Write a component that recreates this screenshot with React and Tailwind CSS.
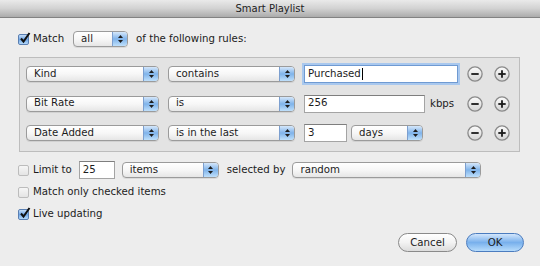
import React from 'react'

const font = { fontFamily: '"DejaVu Sans", "Liberation Sans", sans-serif' }

function Arrows() {
  return (
    <svg width="7" height="10" viewBox="0 0 7 10" className="block">
      <path d="M3.5 1 L6 4 L1 4 Z" fill="#1d1d1d" />
      <path d="M3.5 9 L6 6 L1 6 Z" fill="#1d1d1d" />
    </svg>
  )
}

function Select({ label, w, h = 'h-[16px]' }) {
  return (
    <div
      className={`${w} ${h} shrink-0 flex rounded-[4px] border border-[#9b9b9b] overflow-hidden bg-gradient-to-b from-white via-[#f7f7f7] to-[#e6e6e6] shadow-[0_1px_0_rgba(0,0,0,0.08)]`}
    >
      <div className="flex-1 flex items-center pl-[7px] text-[#1c1c1c] leading-none">{label}</div>
      <div className="w-[15px] flex items-center justify-center border-l border-[#7c9fcf] bg-gradient-to-b from-[#d5e7fa] via-[#7fb3ea] to-[#bfe0fb]">
        <Arrows />
      </div>
    </div>
  )
}

function Field({ value, w, focused, cursor }) {
  return (
    <div
      className={`${w} h-[18px] shrink-0 flex items-center pl-[3px] bg-white leading-none text-[#1c1c1c] ${
        focused
          ? 'border border-[#6f9ad2] ring-2 ring-[#a9c8ee]'
          : 'border border-[#a4a4a4] border-t-[#7e7e7e]'
      }`}
    >
      {value}
      {cursor && <span className="ml-[1px] w-px h-[12px] bg-black" />}
    </div>
  )
}

function Checkbox({ checked }) {
  if (checked) {
    return (
      <div className="w-[11px] h-[11px] shrink-0 relative rounded-[2px] border border-[#5a7fb2] bg-gradient-to-b from-[#c6ddf6] via-[#6fa6e6] to-[#b5d9f9]">
        <svg width="12" height="12" viewBox="0 0 12 12" className="absolute left-[0px] top-[-3px]">
          <path d="M2 6.5 L4.5 9.5 L10.5 1" stroke="#111" strokeWidth="2" fill="none" />
        </svg>
      </div>
    )
  }
  return (
    <div className="w-[11px] h-[11px] shrink-0 rounded-[2px] border border-[#bcbcbc] bg-gradient-to-b from-[#f6f6f6] to-[#e4e4e4]" />
  )
}

function Circle({ plus }) {
  return (
    <svg width="16" height="16" viewBox="0 0 16 16" className="block shrink-0">
      <defs>
        <linearGradient id={plus ? 'gp' : 'gm'} x1="0" y1="0" x2="0" y2="1">
          <stop offset="0" stopColor="#fcfcfc" />
          <stop offset="1" stopColor="#d4d4d4" />
        </linearGradient>
      </defs>
      <circle cx="8" cy="8" r="7.1" fill={`url(#${plus ? 'gp' : 'gm'})`} stroke="#8a8a8a" strokeWidth="1.3" />
      <path d="M4.3 8 H11.7" stroke="#1a1a1a" strokeWidth="1.8" />
      {plus && <path d="M8 4.3 V11.7" stroke="#1a1a1a" strokeWidth="1.8" />}
    </svg>
  )
}

function Rule({ field, op, children }) {
  return (
    <div className="h-[18px] flex items-center">
      <Select label={field} w="w-[133px]" />
      <div className="ml-[9px]">
        <Select label={op} w="w-[127px]" />
      </div>
      <div className="ml-[9px] w-[154px] flex items-center">{children}</div>
      <div className="ml-[9px]">
        <Circle />
      </div>
      <div className="ml-[11px]">
        <Circle plus />
      </div>
    </div>
  )
}

export default function App() {
  return (
    <div
      className="w-[540px] h-[266px] bg-[#ededed] flex flex-col overflow-hidden text-[10.2px] text-[#1c1c1c]"
      style={font}
    >
      <div className="h-[18px] shrink-0 flex items-center justify-center bg-gradient-to-b from-[#eaeaea] via-[#d2d2d2] to-[#ababab] border-b border-[#828282] text-[10px] text-[#222]">
        Smart Playlist
      </div>

      <div className="pl-[18px] pr-[16px] flex flex-col">
        <div className="mt-[13px] h-[16px] flex items-center">
          <Checkbox checked />
          <span className="ml-[4px]">Match</span>
          <div className="ml-[9px]">
            <Select label="all" w="w-[55px]" />
          </div>
          <span className="ml-[8px]">of the following rules:</span>
        </div>

        <div className="mt-[10px] ml-[1px] w-[501px] border border-[#bdbdbd] bg-[#e3e3e3] pt-[7px] pb-[9px] pl-[6px] flex flex-col gap-[11.5px]">
          <Rule field="Kind" op="contains">
            <Field value="Purchased" w="w-[154px]" focused cursor />
          </Rule>
          <Rule field="Bit Rate" op="is">
            <Field value="256" w="w-[121px]" />
            <span className="ml-[5px]">kbps</span>
          </Rule>
          <Rule field="Date Added" op="is in the last">
            <Field value="3" w="w-[43px]" />
            <div className="ml-[4px]">
              <Select label="days" w="w-[72px]" />
            </div>
          </Rule>
        </div>

        <div className="mt-[9px] h-[18px] flex items-center">
          <Checkbox />
          <span className="ml-[4px]">Limit to</span>
          <div className="ml-[7px]">
            <Field value="25" w="w-[36px]" />
          </div>
          <div className="ml-[7px]">
            <Select label="items" w="w-[97px]" />
          </div>
          <span className="ml-[8px]">selected by</span>
          <div className="ml-[7px]">
            <Select label="random" w="w-[189px]" />
          </div>
        </div>

        <div className="mt-[2px] h-[22px] flex items-center">
          <Checkbox />
          <span className="ml-[4px]">Match only checked items</span>
        </div>
        <div className="h-[22px] flex items-center">
          <Checkbox checked />
          <span className="ml-[4px]">Live updating</span>
        </div>

        <div className="mt-[8px] flex justify-end gap-[9px]">
          <div className="w-[59px] h-[19px] flex items-center justify-center rounded-full border border-[#8a8a8a] bg-gradient-to-b from-white via-[#f3f3f3] to-[#dcdcdc]">
            Cancel
          </div>
          <div className="w-[58px] h-[19px] flex items-center justify-center rounded-full border border-[#4b7cbf] bg-gradient-to-b from-[#d3e6fb] via-[#78b0ec] to-[#b7dcfb] font-medium">
            OK
          </div>
        </div>
      </div>
    </div>
  )
}
